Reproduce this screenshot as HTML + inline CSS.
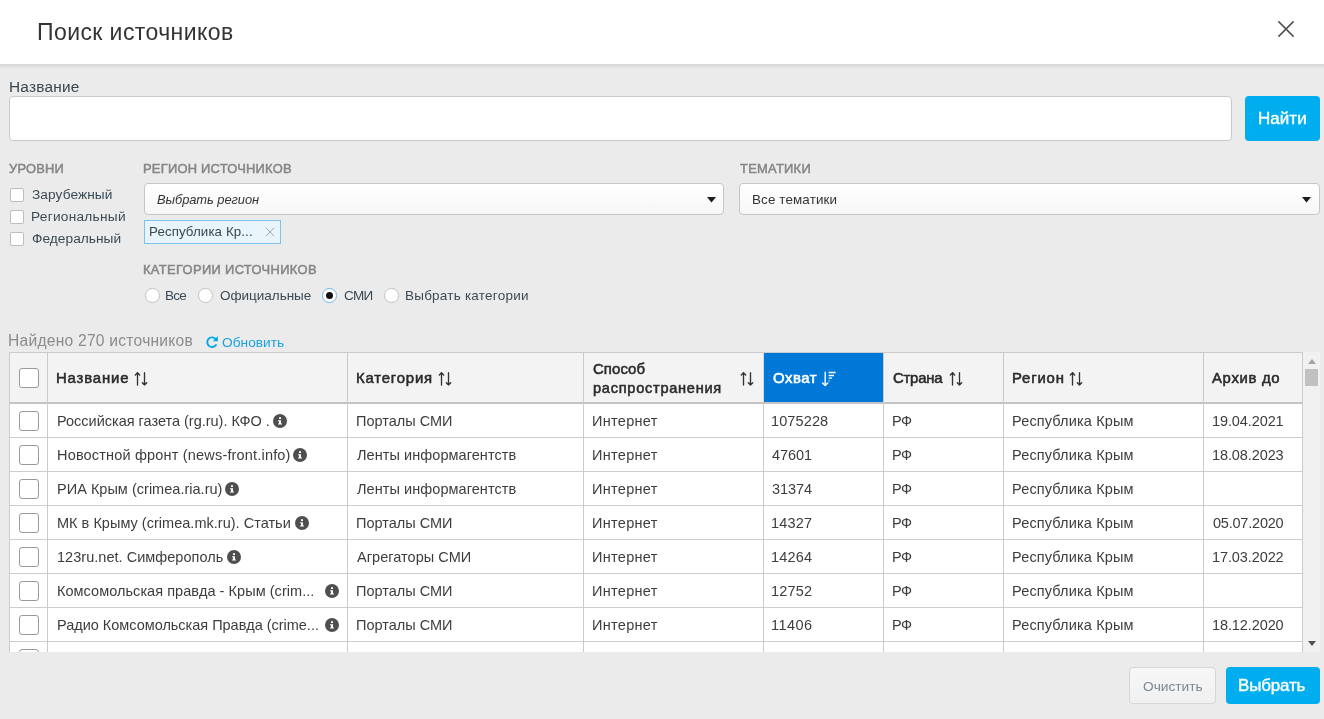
<!DOCTYPE html>
<html><head><meta charset="utf-8"><style>
html,body{margin:0;padding:0;}
body{width:1324px;height:719px;position:relative;overflow:hidden;background:#ebebeb;font-family:"Liberation Sans", sans-serif;}
.t{position:absolute;white-space:nowrap;will-change:transform;}
</style></head><body>
<div style="position:absolute;left:0px;top:0px;width:1324px;height:64px;background:#fff;"></div>
<div style="position:absolute;left:0px;top:64px;width:1324px;height:5px;background:linear-gradient(#d6d6d6,#ebebeb);"></div>
<div class="t" style="left:37.30px;top:17px;font-size:23px;line-height:30px;color:#333;font-weight:400;font-style:normal;letter-spacing:0.415px;">Поиск источников</div>
<svg style="position:absolute;left:1277px;top:20px" width="18" height="18" viewBox="0 0 18 18"><path d="M1.4 1.4L16.6 16.6M16.6 1.4L1.4 16.6" stroke="#505050" stroke-width="1.5"/></svg>
<div class="t" style="left:8.60px;top:72px;font-size:15.4px;line-height:30px;color:#3a4650;font-weight:400;font-style:normal;letter-spacing:0.212px;">Название</div>
<div style="position:absolute;left:9px;top:96px;width:1223px;height:45px;background:#fff;border:1px solid #c9c9c9;border-radius:4px;box-sizing:border-box;"></div>
<div style="position:absolute;left:1245px;top:96px;width:75px;height:45px;background:#00aeef;border-radius:4px;"></div>
<div class="t" style="left:1257.70px;top:104px;font-size:17px;line-height:30px;color:#fff;font-weight:400;font-style:normal;letter-spacing:0.047px;-webkit-text-stroke:0.4px #fff;">Найти</div>
<div class="t" style="left:8.60px;top:154px;font-size:12.9px;line-height:30px;color:#858585;font-weight:400;font-style:normal;letter-spacing:0.213px;-webkit-text-stroke:0.5px #858585;">УРОВНИ</div>
<div style="position:absolute;left:10px;top:188px;width:14px;height:14px;background:#fff;border:1px solid #bdbdbd;border-radius:2px;box-sizing:border-box;"></div>
<div class="t" style="left:31.70px;top:180px;font-size:13.7px;line-height:30px;color:#3a4a56;font-weight:400;font-style:normal;letter-spacing:0.074px;">Зарубежный</div>
<div style="position:absolute;left:10px;top:210px;width:14px;height:14px;background:#fff;border:1px solid #bdbdbd;border-radius:2px;box-sizing:border-box;"></div>
<div class="t" style="left:30.70px;top:202px;font-size:13.7px;line-height:30px;color:#3a4a56;font-weight:400;font-style:normal;letter-spacing:0.257px;">Региональный</div>
<div style="position:absolute;left:10px;top:232px;width:14px;height:14px;background:#fff;border:1px solid #bdbdbd;border-radius:2px;box-sizing:border-box;"></div>
<div class="t" style="left:31.70px;top:224px;font-size:13.7px;line-height:30px;color:#3a4a56;font-weight:400;font-style:normal;letter-spacing:0.044px;">Федеральный</div>
<div class="t" style="left:143.40px;top:154px;font-size:12.9px;line-height:30px;color:#858585;font-weight:400;font-style:normal;letter-spacing:0.238px;-webkit-text-stroke:0.5px #858585;">РЕГИОН ИСТОЧНИКОВ</div>
<div style="position:absolute;left:144px;top:183px;width:580px;height:31.5px;background:linear-gradient(#fff,#f6f6f6);border:1px solid #c6c6c6;border-radius:4px;box-sizing:border-box;"></div>
<div class="t" style="left:156.90px;top:185px;font-size:12.9px;line-height:30px;color:#333;font-weight:400;font-style:italic;letter-spacing:-0.062px;">Выбрать регион</div>
<svg style="position:absolute;left:706.5px;top:196.5px" width="9" height="6" viewBox="0 0 9 6"><path d="M0 0H9L4.5 5.5Z" fill="#1c1c1c"/></svg>
<div style="position:absolute;left:144px;top:220px;width:137px;height:24px;background:#e8f5fd;border:1px solid #7cc2ef;box-sizing:border-box;"></div>
<div class="t" style="left:149.10px;top:217px;font-size:13.3px;line-height:30px;color:#3a4650;font-weight:400;font-style:normal;letter-spacing:0.109px;">Республика Кр...</div>
<svg style="position:absolute;left:264.5px;top:227px" width="10" height="10" viewBox="0 0 10 10"><path d="M0.8 0.8L9.2 9.2M9.2 0.8L0.8 9.2" stroke="#a6a6a6" stroke-width="1"/></svg>
<div class="t" style="left:143.40px;top:255px;font-size:12.9px;line-height:30px;color:#858585;font-weight:400;font-style:normal;letter-spacing:0.347px;-webkit-text-stroke:0.5px #858585;">КАТЕГОРИИ ИСТОЧНИКОВ</div>
<div style="position:absolute;left:145.35px;top:288.15px;width:14.5px;height:14.5px;background:#fff;border:1px solid #c2c2c2;border-radius:50%;box-sizing:border-box;"></div>
<div class="t" style="left:165.40px;top:281px;font-size:13.5px;line-height:30px;color:#3a4a56;font-weight:400;font-style:normal;letter-spacing:-0.727px;">Все</div>
<div style="position:absolute;left:198.25px;top:288.15px;width:14.5px;height:14.5px;background:#fff;border:1px solid #c2c2c2;border-radius:50%;box-sizing:border-box;"></div>
<div class="t" style="left:219.90px;top:281px;font-size:13.5px;line-height:30px;color:#3a4a56;font-weight:400;font-style:normal;letter-spacing:-0.020px;">Официальные</div>
<div style="position:absolute;left:322.25px;top:288.15px;width:14.5px;height:14.5px;background:#fff;border:1px solid #6db8ef;border-radius:50%;box-sizing:border-box;"></div>
<div style="position:absolute;left:325.75px;top:291.65px;width:7.5px;height:7.5px;background:#111;border-radius:50%;"></div>
<div class="t" style="left:343.90px;top:281px;font-size:13.5px;line-height:30px;color:#3a4a56;font-weight:400;font-style:normal;letter-spacing:-0.622px;">СМИ</div>
<div style="position:absolute;left:384.15px;top:288.15px;width:14.5px;height:14.5px;background:#fff;border:1px solid #c2c2c2;border-radius:50%;box-sizing:border-box;"></div>
<div class="t" style="left:405.40px;top:281px;font-size:13.5px;line-height:30px;color:#3a4a56;font-weight:400;font-style:normal;letter-spacing:0.227px;">Выбрать категории</div>
<div class="t" style="left:739.60px;top:154px;font-size:12.9px;line-height:30px;color:#858585;font-weight:400;font-style:normal;letter-spacing:0.279px;-webkit-text-stroke:0.5px #858585;">ТЕМАТИКИ</div>
<div style="position:absolute;left:739px;top:183px;width:580.5px;height:31.5px;background:linear-gradient(#fff,#f6f6f6);border:1px solid #c6c6c6;border-radius:4px;box-sizing:border-box;"></div>
<div class="t" style="left:751.60px;top:185px;font-size:13.4px;line-height:30px;color:#333;font-weight:400;font-style:normal;letter-spacing:0.131px;">Все тематики</div>
<svg style="position:absolute;left:1302px;top:196.5px" width="9" height="6" viewBox="0 0 9 6"><path d="M0 0H9L4.5 5.5Z" fill="#1c1c1c"/></svg>
<div class="t" style="left:8.10px;top:326px;font-size:15.6px;line-height:30px;color:#8c8c8c;font-weight:400;font-style:normal;letter-spacing:0.247px;">Найдено 270 источников</div>
<svg style="position:absolute;left:205px;top:335px" width="14" height="14" viewBox="0 0 14 14"><path d="M10.4 3.7A4.8 4.8 0 1 0 10.9 10.1" fill="none" stroke="#00a8ec" stroke-width="1.9" stroke-linecap="round"/><path d="M12.9 1.1V6.2H7.8Z" fill="#00a8ec"/></svg>
<div class="t" style="left:221.60px;top:328px;font-size:13.7px;line-height:30px;color:#1aa3e0;font-weight:400;font-style:normal;letter-spacing:0.037px;">Обновить</div>
<div style="position:absolute;left:9px;top:352px;width:1294px;height:300px;overflow:hidden;background:#fff;">
<div style="position:absolute;left:0;top:0;width:1294px;height:50px;background:#f3f3f3;"></div>
<div style="position:absolute;left:754px;top:0;width:1px;height:50px;background:#d9d6d3;"></div>
<div style="position:absolute;left:755px;top:0;width:119px;height:50px;background:#0078d7;"></div>
<div style="position:absolute;left:0;top:0;width:1294px;height:1px;background:#cbcbcb;"></div>
<div style="position:absolute;left:0;top:50px;width:1294px;height:2px;background:#c4c4c4;"></div>
<div style="position:absolute;left:0;top:85px;width:1294px;height:1px;background:#cdcdcd;"></div>
<div style="position:absolute;left:0;top:119px;width:1294px;height:1px;background:#cdcdcd;"></div>
<div style="position:absolute;left:0;top:153px;width:1294px;height:1px;background:#cdcdcd;"></div>
<div style="position:absolute;left:0;top:187px;width:1294px;height:1px;background:#cdcdcd;"></div>
<div style="position:absolute;left:0;top:221px;width:1294px;height:1px;background:#cdcdcd;"></div>
<div style="position:absolute;left:0;top:255px;width:1294px;height:1px;background:#cdcdcd;"></div>
<div style="position:absolute;left:0;top:289px;width:1294px;height:1px;background:#cdcdcd;"></div>
<div style="position:absolute;left:0px;top:0;width:1px;height:300px;background:#cbcbcb;"></div>
<div style="position:absolute;left:38px;top:0;width:1px;height:300px;background:#cbcbcb;"></div>
<div style="position:absolute;left:338px;top:0;width:1px;height:300px;background:#cbcbcb;"></div>
<div style="position:absolute;left:574px;top:0;width:1px;height:300px;background:#cbcbcb;"></div>
<div style="position:absolute;left:994px;top:0;width:1px;height:300px;background:#cbcbcb;"></div>
<div style="position:absolute;left:1194px;top:0;width:1px;height:300px;background:#cbcbcb;"></div>
<div style="position:absolute;left:1293px;top:0;width:1px;height:300px;background:#cbcbcb;"></div>
<div style="position:absolute;left:754px;top:50px;width:1px;height:300px;background:#cbcbcb;"></div>
<div style="position:absolute;left:874px;top:50px;width:1px;height:300px;background:#cbcbcb;"></div>
<div style="position:absolute;left:874px;top:0px;width:1px;height:50px;background:#cbcbcb;"></div>
</div>
<div style="position:absolute;left:19px;top:368px;width:20px;height:20px;background:#fff;border:1px solid #9a9a9a;border-radius:3px;box-sizing:border-box;"></div>
<div class="t" style="left:56.10px;top:363px;font-size:14.9px;line-height:30px;color:#2b2b2b;font-weight:400;font-style:normal;letter-spacing:0.848px;-webkit-text-stroke:0.55px #2b2b2b;">Название</div>
<svg style="position:absolute;left:133px;top:371px" width="15" height="16" viewBox="0 0 15 16"><g fill="none" stroke="#333" stroke-width="1.35" stroke-linecap="round" stroke-linejoin="round"><path d="M4.5 14.0V1.7M2.3 4.0L4.5 1.7L6.7 4.0"/><path d="M11.5 1.7V14.0M9.3 11.7L11.5 14.0L13.7 11.7"/></g></svg>
<div class="t" style="left:356.30px;top:363px;font-size:14.9px;line-height:30px;color:#2b2b2b;font-weight:400;font-style:normal;letter-spacing:0.819px;-webkit-text-stroke:0.55px #2b2b2b;">Категория</div>
<svg style="position:absolute;left:437px;top:371px" width="15" height="16" viewBox="0 0 15 16"><g fill="none" stroke="#333" stroke-width="1.35" stroke-linecap="round" stroke-linejoin="round"><path d="M4.5 14.0V1.7M2.3 4.0L4.5 1.7L6.7 4.0"/><path d="M11.5 1.7V14.0M9.3 11.7L11.5 14.0L13.7 11.7"/></g></svg>
<div class="t" style="left:593.20px;top:354px;font-size:14.9px;line-height:30px;color:#2b2b2b;font-weight:400;font-style:normal;letter-spacing:0.102px;-webkit-text-stroke:0.55px #2b2b2b;">Способ</div>
<div class="t" style="left:593.20px;top:373px;font-size:14.6px;line-height:30px;color:#2b2b2b;font-weight:400;font-style:normal;letter-spacing:0.717px;-webkit-text-stroke:0.55px #2b2b2b;">распространения</div>
<svg style="position:absolute;left:739px;top:371px" width="15" height="16" viewBox="0 0 15 16"><g fill="none" stroke="#333" stroke-width="1.35" stroke-linecap="round" stroke-linejoin="round"><path d="M4.5 14.0V1.7M2.3 4.0L4.5 1.7L6.7 4.0"/><path d="M11.5 1.7V14.0M9.3 11.7L11.5 14.0L13.7 11.7"/></g></svg>
<div class="t" style="left:772.80px;top:363px;font-size:14.9px;line-height:30px;color:#fff;font-weight:400;font-style:normal;letter-spacing:0.561px;-webkit-text-stroke:0.55px #fff;">Охват</div>
<svg style="position:absolute;left:821px;top:371px" width="16" height="16" viewBox="0 0 16 16"><g fill="none" stroke="#fff" stroke-width="1.4" stroke-linecap="round" stroke-linejoin="round"><path d="M4.2 1.2V14.6M1.6 12L4.2 14.6L6.8 12"/></g><g stroke="#fff" stroke-width="1.3"><path d="M7.6 1.5H14.6M7.6 4.5H13M7.6 7.2H11M7.6 9.8H8.6"/></g></svg>
<div class="t" style="left:892.90px;top:363px;font-size:14.9px;line-height:30px;color:#2b2b2b;font-weight:400;font-style:normal;letter-spacing:-0.232px;-webkit-text-stroke:0.55px #2b2b2b;">Страна</div>
<svg style="position:absolute;left:948px;top:371px" width="15" height="16" viewBox="0 0 15 16"><g fill="none" stroke="#333" stroke-width="1.35" stroke-linecap="round" stroke-linejoin="round"><path d="M4.5 14.0V1.7M2.3 4.0L4.5 1.7L6.7 4.0"/><path d="M11.5 1.7V14.0M9.3 11.7L11.5 14.0L13.7 11.7"/></g></svg>
<div class="t" style="left:1012.00px;top:363px;font-size:14.9px;line-height:30px;color:#2b2b2b;font-weight:400;font-style:normal;letter-spacing:0.822px;-webkit-text-stroke:0.55px #2b2b2b;">Регион</div>
<svg style="position:absolute;left:1068px;top:371px" width="15" height="16" viewBox="0 0 15 16"><g fill="none" stroke="#333" stroke-width="1.35" stroke-linecap="round" stroke-linejoin="round"><path d="M4.5 14.0V1.7M2.3 4.0L4.5 1.7L6.7 4.0"/><path d="M11.5 1.7V14.0M9.3 11.7L11.5 14.0L13.7 11.7"/></g></svg>
<div class="t" style="left:1212.30px;top:363px;font-size:14.9px;line-height:30px;color:#2b2b2b;font-weight:400;font-style:normal;letter-spacing:0.679px;-webkit-text-stroke:0.55px #2b2b2b;">Архив до</div>
<div style="position:absolute;left:19px;top:411px;width:20px;height:20px;background:#fff;border:1px solid #9a9a9a;border-radius:3px;box-sizing:border-box;"></div>
<div class="t" style="left:56.70px;top:406px;font-size:14.5px;line-height:30px;color:#3d3d3d;font-weight:400;font-style:normal;letter-spacing:-0.009px;">Российская газета (rg.ru). КФО .</div>
<svg style="position:absolute;left:273px;top:414px" width="14" height="14" viewBox="0 0 14 14"><circle cx="7" cy="7" r="7" fill="#4f4f4f"/><path d="M6 3.3H8V5H6Z M5 6.2H8V9.6H9V10.6H5V9.6H6V7.2H5Z" fill="#fff"/></svg>
<div class="t" style="left:356.30px;top:406px;font-size:14.5px;line-height:30px;color:#3d3d3d;font-weight:400;font-style:normal;letter-spacing:0.003px;">Порталы СМИ</div>
<div class="t" style="left:592.20px;top:406px;font-size:14.5px;line-height:30px;color:#3d3d3d;font-weight:400;font-style:normal;letter-spacing:0.296px;">Интернет</div>
<div class="t" style="left:771.30px;top:406px;font-size:14.5px;line-height:30px;color:#3d3d3d;font-weight:400;font-style:normal;letter-spacing:0.119px;">1075228</div>
<div class="t" style="left:891.80px;top:406px;font-size:14.5px;line-height:30px;color:#3d3d3d;font-weight:400;font-style:normal;letter-spacing:-0.409px;">РФ</div>
<div class="t" style="left:1012.30px;top:406px;font-size:14.5px;line-height:30px;color:#3d3d3d;font-weight:400;font-style:normal;letter-spacing:0.142px;">Республика Крым</div>
<div class="t" style="left:1211.50px;top:406px;font-size:14.5px;line-height:30px;color:#3d3d3d;font-weight:400;font-style:normal;letter-spacing:-0.101px;">19.04.2021</div>
<div style="position:absolute;left:19px;top:445px;width:20px;height:20px;background:#fff;border:1px solid #9a9a9a;border-radius:3px;box-sizing:border-box;"></div>
<div class="t" style="left:56.70px;top:440px;font-size:14.5px;line-height:30px;color:#3d3d3d;font-weight:400;font-style:normal;letter-spacing:0.178px;">Новостной фронт (news-front.info)</div>
<svg style="position:absolute;left:293px;top:448px" width="14" height="14" viewBox="0 0 14 14"><circle cx="7" cy="7" r="7" fill="#4f4f4f"/><path d="M6 3.3H8V5H6Z M5 6.2H8V9.6H9V10.6H5V9.6H6V7.2H5Z" fill="#fff"/></svg>
<div class="t" style="left:357.30px;top:440px;font-size:14.5px;line-height:30px;color:#3d3d3d;font-weight:400;font-style:normal;letter-spacing:0.064px;">Ленты информагентств</div>
<div class="t" style="left:592.20px;top:440px;font-size:14.5px;line-height:30px;color:#3d3d3d;font-weight:400;font-style:normal;letter-spacing:0.296px;">Интернет</div>
<div class="t" style="left:772.30px;top:440px;font-size:14.5px;line-height:30px;color:#3d3d3d;font-weight:400;font-style:normal;letter-spacing:-0.039px;">47601</div>
<div class="t" style="left:891.80px;top:440px;font-size:14.5px;line-height:30px;color:#3d3d3d;font-weight:400;font-style:normal;letter-spacing:-0.409px;">РФ</div>
<div class="t" style="left:1012.30px;top:440px;font-size:14.5px;line-height:30px;color:#3d3d3d;font-weight:400;font-style:normal;letter-spacing:0.142px;">Республика Крым</div>
<div class="t" style="left:1211.50px;top:440px;font-size:14.5px;line-height:30px;color:#3d3d3d;font-weight:400;font-style:normal;letter-spacing:-0.101px;">18.08.2023</div>
<div style="position:absolute;left:19px;top:479px;width:20px;height:20px;background:#fff;border:1px solid #9a9a9a;border-radius:3px;box-sizing:border-box;"></div>
<div class="t" style="left:56.70px;top:474px;font-size:14.5px;line-height:30px;color:#3d3d3d;font-weight:400;font-style:normal;letter-spacing:0.021px;">РИА Крым (crimea.ria.ru)</div>
<svg style="position:absolute;left:225px;top:482px" width="14" height="14" viewBox="0 0 14 14"><circle cx="7" cy="7" r="7" fill="#4f4f4f"/><path d="M6 3.3H8V5H6Z M5 6.2H8V9.6H9V10.6H5V9.6H6V7.2H5Z" fill="#fff"/></svg>
<div class="t" style="left:357.30px;top:474px;font-size:14.5px;line-height:30px;color:#3d3d3d;font-weight:400;font-style:normal;letter-spacing:0.064px;">Ленты информагентств</div>
<div class="t" style="left:592.20px;top:474px;font-size:14.5px;line-height:30px;color:#3d3d3d;font-weight:400;font-style:normal;letter-spacing:0.296px;">Интернет</div>
<div class="t" style="left:772.30px;top:474px;font-size:14.5px;line-height:30px;color:#3d3d3d;font-weight:400;font-style:normal;letter-spacing:-0.039px;">31374</div>
<div class="t" style="left:891.80px;top:474px;font-size:14.5px;line-height:30px;color:#3d3d3d;font-weight:400;font-style:normal;letter-spacing:-0.409px;">РФ</div>
<div class="t" style="left:1012.30px;top:474px;font-size:14.5px;line-height:30px;color:#3d3d3d;font-weight:400;font-style:normal;letter-spacing:0.142px;">Республика Крым</div>
<div style="position:absolute;left:19px;top:513px;width:20px;height:20px;background:#fff;border:1px solid #9a9a9a;border-radius:3px;box-sizing:border-box;"></div>
<div class="t" style="left:56.70px;top:508px;font-size:14.5px;line-height:30px;color:#3d3d3d;font-weight:400;font-style:normal;letter-spacing:0.021px;">МК в Крыму (crimea.mk.ru). Статьи</div>
<svg style="position:absolute;left:295px;top:516px" width="14" height="14" viewBox="0 0 14 14"><circle cx="7" cy="7" r="7" fill="#4f4f4f"/><path d="M6 3.3H8V5H6Z M5 6.2H8V9.6H9V10.6H5V9.6H6V7.2H5Z" fill="#fff"/></svg>
<div class="t" style="left:356.30px;top:508px;font-size:14.5px;line-height:30px;color:#3d3d3d;font-weight:400;font-style:normal;letter-spacing:0.003px;">Порталы СМИ</div>
<div class="t" style="left:592.20px;top:508px;font-size:14.5px;line-height:30px;color:#3d3d3d;font-weight:400;font-style:normal;letter-spacing:0.296px;">Интернет</div>
<div class="t" style="left:771.30px;top:508px;font-size:14.5px;line-height:30px;color:#3d3d3d;font-weight:400;font-style:normal;letter-spacing:0.211px;">14327</div>
<div class="t" style="left:891.80px;top:508px;font-size:14.5px;line-height:30px;color:#3d3d3d;font-weight:400;font-style:normal;letter-spacing:-0.409px;">РФ</div>
<div class="t" style="left:1012.30px;top:508px;font-size:14.5px;line-height:30px;color:#3d3d3d;font-weight:400;font-style:normal;letter-spacing:0.142px;">Республика Крым</div>
<div class="t" style="left:1212.50px;top:508px;font-size:14.5px;line-height:30px;color:#3d3d3d;font-weight:400;font-style:normal;letter-spacing:-0.212px;">05.07.2020</div>
<div style="position:absolute;left:19px;top:547px;width:20px;height:20px;background:#fff;border:1px solid #9a9a9a;border-radius:3px;box-sizing:border-box;"></div>
<div class="t" style="left:56.70px;top:542px;font-size:14.5px;line-height:30px;color:#3d3d3d;font-weight:400;font-style:normal;letter-spacing:0.031px;">123ru.net. Симферополь</div>
<svg style="position:absolute;left:227px;top:550px" width="14" height="14" viewBox="0 0 14 14"><circle cx="7" cy="7" r="7" fill="#4f4f4f"/><path d="M6 3.3H8V5H6Z M5 6.2H8V9.6H9V10.6H5V9.6H6V7.2H5Z" fill="#fff"/></svg>
<div class="t" style="left:357.30px;top:542px;font-size:14.5px;line-height:30px;color:#3d3d3d;font-weight:400;font-style:normal;letter-spacing:0.042px;">Агрегаторы СМИ</div>
<div class="t" style="left:592.20px;top:542px;font-size:14.5px;line-height:30px;color:#3d3d3d;font-weight:400;font-style:normal;letter-spacing:0.296px;">Интернет</div>
<div class="t" style="left:771.30px;top:542px;font-size:14.5px;line-height:30px;color:#3d3d3d;font-weight:400;font-style:normal;letter-spacing:0.211px;">14264</div>
<div class="t" style="left:891.80px;top:542px;font-size:14.5px;line-height:30px;color:#3d3d3d;font-weight:400;font-style:normal;letter-spacing:-0.409px;">РФ</div>
<div class="t" style="left:1012.30px;top:542px;font-size:14.5px;line-height:30px;color:#3d3d3d;font-weight:400;font-style:normal;letter-spacing:0.142px;">Республика Крым</div>
<div class="t" style="left:1211.50px;top:542px;font-size:14.5px;line-height:30px;color:#3d3d3d;font-weight:400;font-style:normal;letter-spacing:-0.101px;">17.03.2022</div>
<div style="position:absolute;left:19px;top:581px;width:20px;height:20px;background:#fff;border:1px solid #9a9a9a;border-radius:3px;box-sizing:border-box;"></div>
<div class="t" style="left:56.70px;top:576px;font-size:14.5px;line-height:30px;color:#3d3d3d;font-weight:400;font-style:normal;letter-spacing:0.047px;">Комсомольская правда - Крым (crim...</div>
<svg style="position:absolute;left:325px;top:584px" width="14" height="14" viewBox="0 0 14 14"><circle cx="7" cy="7" r="7" fill="#4f4f4f"/><path d="M6 3.3H8V5H6Z M5 6.2H8V9.6H9V10.6H5V9.6H6V7.2H5Z" fill="#fff"/></svg>
<div class="t" style="left:356.30px;top:576px;font-size:14.5px;line-height:30px;color:#3d3d3d;font-weight:400;font-style:normal;letter-spacing:0.003px;">Порталы СМИ</div>
<div class="t" style="left:592.20px;top:576px;font-size:14.5px;line-height:30px;color:#3d3d3d;font-weight:400;font-style:normal;letter-spacing:0.296px;">Интернет</div>
<div class="t" style="left:771.30px;top:576px;font-size:14.5px;line-height:30px;color:#3d3d3d;font-weight:400;font-style:normal;letter-spacing:0.211px;">12752</div>
<div class="t" style="left:891.80px;top:576px;font-size:14.5px;line-height:30px;color:#3d3d3d;font-weight:400;font-style:normal;letter-spacing:-0.409px;">РФ</div>
<div class="t" style="left:1012.30px;top:576px;font-size:14.5px;line-height:30px;color:#3d3d3d;font-weight:400;font-style:normal;letter-spacing:0.142px;">Республика Крым</div>
<div style="position:absolute;left:19px;top:615px;width:20px;height:20px;background:#fff;border:1px solid #9a9a9a;border-radius:3px;box-sizing:border-box;"></div>
<div class="t" style="left:56.70px;top:610px;font-size:14.5px;line-height:30px;color:#3d3d3d;font-weight:400;font-style:normal;letter-spacing:-0.015px;">Радио Комсомольская Правда (crime...</div>
<svg style="position:absolute;left:325px;top:618px" width="14" height="14" viewBox="0 0 14 14"><circle cx="7" cy="7" r="7" fill="#4f4f4f"/><path d="M6 3.3H8V5H6Z M5 6.2H8V9.6H9V10.6H5V9.6H6V7.2H5Z" fill="#fff"/></svg>
<div class="t" style="left:356.30px;top:610px;font-size:14.5px;line-height:30px;color:#3d3d3d;font-weight:400;font-style:normal;letter-spacing:0.003px;">Порталы СМИ</div>
<div class="t" style="left:592.20px;top:610px;font-size:14.5px;line-height:30px;color:#3d3d3d;font-weight:400;font-style:normal;letter-spacing:0.296px;">Интернет</div>
<div class="t" style="left:771.30px;top:610px;font-size:14.5px;line-height:30px;color:#3d3d3d;font-weight:400;font-style:normal;letter-spacing:0.480px;">11406</div>
<div class="t" style="left:891.80px;top:610px;font-size:14.5px;line-height:30px;color:#3d3d3d;font-weight:400;font-style:normal;letter-spacing:-0.409px;">РФ</div>
<div class="t" style="left:1012.30px;top:610px;font-size:14.5px;line-height:30px;color:#3d3d3d;font-weight:400;font-style:normal;letter-spacing:0.142px;">Республика Крым</div>
<div class="t" style="left:1211.50px;top:610px;font-size:14.5px;line-height:30px;color:#3d3d3d;font-weight:400;font-style:normal;letter-spacing:-0.101px;">18.12.2020</div>
<div style="position:absolute;left:9px;top:642px;width:1294px;height:10px;overflow:hidden;">
<div style="position:absolute;left:10px;top:7px;width:20px;height:20px;background:#fff;border:1px solid #9a9a9a;border-radius:3px;box-sizing:border-box;"></div>
</div>
<div style="position:absolute;left:1303px;top:352px;width:17px;height:300px;background:#f1f1f1;"></div>
<svg style="position:absolute;left:1307.5px;top:358.5px" width="8" height="5" viewBox="0 0 8 5"><path d="M0 5H8L4 0Z" fill="#a3a3a3"/></svg>
<div style="position:absolute;left:1305px;top:369px;width:13px;height:17px;background:#c1c1c1;"></div>
<svg style="position:absolute;left:1307.5px;top:640.5px" width="8" height="5" viewBox="0 0 8 5"><path d="M0 0H8L4 5Z" fill="#505050"/></svg>
<div style="position:absolute;left:1129px;top:667px;width:87px;height:37px;background:linear-gradient(#f7f7f7,#f0f0f0);border:1px solid #d6d6d6;border-radius:4px;box-sizing:border-box;"></div>
<div class="t" style="left:1142.70px;top:672px;font-size:13.7px;line-height:30px;color:#7b8791;font-weight:400;font-style:normal;letter-spacing:0.007px;">Очистить</div>
<div style="position:absolute;left:1226px;top:667px;width:94px;height:37px;background:#00aeef;border-radius:4px;"></div>
<div class="t" style="left:1238.40px;top:671px;font-size:17px;line-height:30px;color:#fff;font-weight:400;font-style:normal;letter-spacing:-0.186px;-webkit-text-stroke:0.4px #fff;">Выбрать</div>
</body></html>
